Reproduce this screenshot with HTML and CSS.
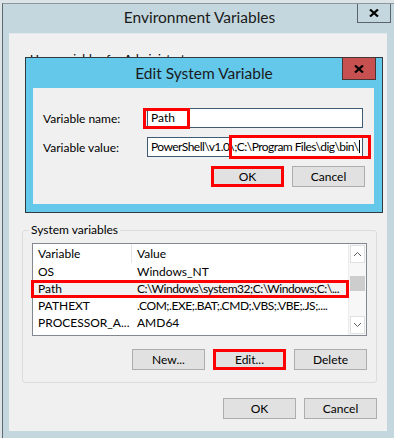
FILE: index.html
```html
<!DOCTYPE html>
<html lang="en">
<head>
<meta charset="UTF-8" />
<title>Environment Variables</title>
<link rel="stylesheet" href="styles.css">
</head>
<body>

<div class="window">
  <div class="titlebar">
    <span class="title">Environment Variables</span>
    <span class="close">
      <svg width="10" height="8" viewBox="0 0 10 8"><path d="M1 0.5 L9 7.5 M9 0.5 L1 7.5" stroke="#000" stroke-width="2.2" fill="none"/></svg>
    </span>
  </div>

  <div class="client">
    <div class="user-area">
      <p class="section-label">User variables for Administrator</p>
    </div>

    <fieldset class="group">
      <legend>System variables</legend>
      <div class="group-body">
        <div class="listbox">
          <div class="list-main">
            <div class="list-head">
              <span class="col-var">Variable</span>
              <span class="col-val">Value</span>
            </div>
            <div class="list-row"><span class="col-var">OS</span><span class="col-val">Windows_NT</span></div>
            <div class="list-row selected"><span class="col-var">Path</span><span class="col-val tight">C:\Windows\system32;C:\Windows;C:\...</span></div>
            <div class="list-row"><span class="col-var">PATHEXT</span><span class="col-val tight">.COM;.EXE;.BAT;.CMD;.VBS;.VBE;.JS;....</span></div>
            <div class="list-row"><span class="col-var">PROCESSOR_A...</span><span class="col-val">AMD64</span></div>
            <div class="list-row"><span class="col-var">PSModulePath</span><span class="col-val tight">%SystemRoot%\system32\Windows...</span></div>
          </div>
          <div class="scrollbar">
            <span class="sb-arrow">
              <svg width="9" height="6" viewBox="0 0 9 6"><path d="M1 5 L4.5 1.5 L8 5" stroke="#606060" stroke-width="1" fill="none"/></svg>
            </span>
            <span class="sb-track"><span class="sb-thumb"></span></span>
            <span class="sb-arrow">
              <svg width="9" height="6" viewBox="0 0 9 6"><path d="M1 1 L4.5 4.5 L8 1" stroke="#606060" stroke-width="1" fill="none"/></svg>
            </span>
          </div>
          <div class="mark mark-row"></div>
        </div>

        <div class="btn-row">
          <button class="btn">New...</button>
          <button class="btn btn-marked">Edit...</button>
          <button class="btn">Delete</button>
        </div>
      </div>
    </fieldset>

    <div class="btn-row footer">
      <button class="btn">OK</button>
      <button class="btn">Cancel</button>
    </div>
  </div>
</div>

<!-- dialog on top -->
<div class="dialog">
  <div class="dlg-titlebar">
    <span class="dlg-title">Edit System Variable</span>
    <span class="dlg-close">
      <svg width="10" height="8" viewBox="0 0 10 8"><path d="M1 0.5 L9 7.5 M9 0.5 L1 7.5" stroke="#000" stroke-width="2.2" fill="none"/></svg>
    </span>
  </div>
  <div class="dlg-client">
    <div class="field-row">
      <label>Variable name:</label>
      <div class="textbox">Path</div>
    </div>
    <div class="field-row">
      <label>Variable value:</label>
      <div class="textbox tight-box">PowerShell\v1.0\;C:\Program Files\dig\bin\<span class="caret"></span></div>
    </div>
    <div class="btn-row dlg-buttons">
      <button class="btn btn-marked">OK</button>
      <button class="btn">Cancel</button>
    </div>
    <div class="mark mark-name"></div>
    <div class="mark mark-value"></div>
  </div>
</div>

</body>
</html>
```

FILE: styles.css
```css
body {
  margin: 0;
  font-family: Lato, "Liberation Sans", sans-serif;
  font-size: 12px;
  color: #000;
  background: #dde4e7;
  overflow: hidden;
  position: relative;
  height: 438px;
}

/* outer window */
.window {
  margin: 3px 0 0 2px;
  width: 393px;
  height: 440px;
  background: #c4d7de;
  border-left: 1px solid #5f6b70;
  border-top: 1px solid #8a979c;
  display: flex;
  flex-direction: column;
}
.titlebar {
  height: 29px;
  display: grid;
  grid-template-columns: 1fr auto 1fr;
}
.title {
  grid-column: 2;
  font-size: 15.5px;
  color: #1a1a1a;
  padding-top: 4px;
}
.close {
  grid-column: 3;
  justify-self: end;
  align-self: start;
  margin-right: 5px;
  width: 32px;
  height: 18px;
  border: 1px solid #5b6469;
  border-top: none;
  display: flex;
  align-items: center;
  justify-content: center;
}
.client {
  margin-left: 6px;
  width: 378px;
  height: 398px;
  background: #f0f0f0;
  box-sizing: border-box;
  border-top: 1px solid #e2e9ec;
  padding: 0 10px 0 13px;
  display: flex;
  flex-direction: column;
}
.user-area {
  height: 188px;
}
.section-label {
  margin: 17px 0 0 8px;
}

/* group box */
.group {
  margin: 0;
  padding: 0;
  border: 1px solid #dcdcdc;
  border-radius: 3px;
}
.group legend {
  margin-left: 6px;
  padding: 0 2px;
  line-height: 16px;
}
.group-body {
  padding: 5px 9px 12px 9px;
}
.listbox {
  position: relative;
  height: 93px;
  box-sizing: border-box;
  border: 1px solid #828790;
  background: #fff;
  display: flex;
}
.list-main {
  flex: 1;
  overflow: hidden;
}
.list-head {
  height: 19px;
  display: flex;
  align-items: center;
}
.list-head .col-var {
  border-right: 1px solid #e5e5e5;
  height: 19px;
  line-height: 19px;
}
.list-row {
  height: 17px;
  display: flex;
  align-items: center;
}
.list-row.selected {
  background: #f2f2f2;
}
.col-var {
  width: 99px;
  padding-left: 5px;
  box-sizing: border-box;
  flex-shrink: 0;
}
.col-val {
  padding-left: 5px;
  white-space: nowrap;
}
.tight {
  letter-spacing: -0.45px;
}
.scrollbar {
  width: 17px;
  display: flex;
  flex-direction: column;
  background: #f7f7f7;
  border-left: 1px solid #ececec;
}
.sb-arrow {
  height: 16px;
  margin: 1px;
  border: 1px solid #e0e0e0;
  background: #fff;
  display: flex;
  align-items: center;
  justify-content: center;
}
.sb-track {
  flex: 1;
  padding-top: 12px;
}
.sb-thumb {
  display: block;
  height: 15px;
  margin: 0 1px;
  background: #cdcdcd;
}

/* buttons */
.btn-row {
  display: flex;
  justify-content: flex-end;
  gap: 8px;
  margin-top: 13px;
}
.btn {
  width: 73px;
  height: 21px;
  box-sizing: border-box;
  border: 1px solid #adadad;
  background: #e1e1e1;
  font-family: inherit;
  font-size: 12px;
  color: #000;
  padding: 0;
}
.btn-marked {
  border: 3px solid #f00;
}
.footer {
  margin-top: 15px;
}

/* annotation marks */
.mark {
  position: absolute;
  border: 3px solid #f00;
  box-sizing: border-box;
}
.mark-row {
  left: -2px;
  top: 36px;
  width: 318px;
  height: 18px;
}

/* edit dialog */
.dialog {
  position: absolute;
  left: 25px;
  top: 57px;
  width: 358px;
  height: 156px;
  box-sizing: border-box;
  border: 1px solid #2e3a40;
  background: #64c8ea;
  display: flex;
  flex-direction: column;
}
.dlg-titlebar {
  height: 30px;
  display: grid;
  grid-template-columns: 1fr auto 1fr;
}
.dlg-title {
  grid-column: 2;
  font-size: 15.5px;
  color: #1a1a1a;
  padding-top: 6px;
}
.dlg-close {
  grid-column: 3;
  justify-self: end;
  align-self: start;
  margin: -1px 6px 0 0;
  width: 32px;
  height: 21px;
  background: #c75050;
  border: 1px solid #4a3434;
  display: flex;
  align-items: center;
  justify-content: center;
}
.dlg-client {
  position: relative;
  margin: 0 8px 0 7px;
  height: 116px;
  background: #f0f0f0;
  padding: 20px 10px 0 10px;
  box-sizing: border-box;
}
.field-row {
  display: flex;
  align-items: center;
  margin-bottom: 9px;
}
.field-row label {
  width: 104px;
}
.textbox {
  width: 216px;
  height: 20px;
  box-sizing: border-box;
  border: 1px solid #3f5a73;
  background: #fff;
  padding: 0 0 0 3px;
  line-height: 18px;
  white-space: nowrap;
  overflow: hidden;
}
.tight-box {
  letter-spacing: -0.55px;
}
.caret {
  display: inline-block;
  width: 1px;
  height: 13px;
  margin-left: 1px;
  background: #000;
  vertical-align: -2px;
}
.dlg-buttons {
  margin-top: 4px;
  margin-right: -1px;
}
.mark-name {
  left: 110px;
  top: 20px;
  width: 47px;
  height: 21px;
}
.mark-value {
  left: 196px;
  top: 47px;
  width: 142px;
  height: 24px;
}
```
